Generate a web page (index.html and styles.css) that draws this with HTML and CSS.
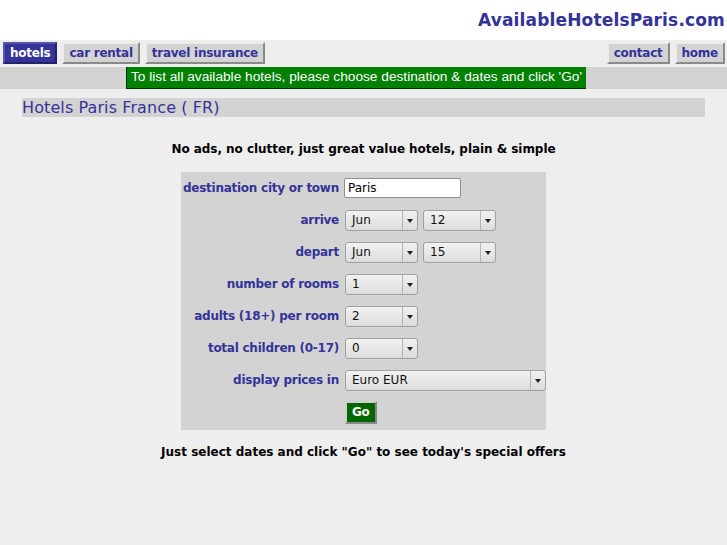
FILE: index.html
```html
<!DOCTYPE html>
<html>
<head>
<meta charset="utf-8">
<title>AvailableHotelsParis.com</title>
<link rel="stylesheet" href="styles.css">
</head>
<body>
<header class="top">
  <div class="brand">AvailableHotelsParis.com</div>
</header>
<nav class="nav">
  <div class="nav-left">
    <a class="tab active" href="#">hotels</a>
    <a class="tab" href="#">car rental</a>
    <a class="tab" href="#">travel insurance</a>
  </div>
  <div class="nav-right">
    <a class="tab" href="#">contact</a>
    <a class="tab" href="#">home</a>
  </div>
</nav>
<div class="band">
  <div class="notice">To list all available hotels, please choose destination &amp; dates and click 'Go'</div>
</div>
<main class="main">
  <h1 class="title">Hotels Paris France ( FR)</h1>
  <p class="tagline">No ads, no clutter, just great value hotels, plain &amp; simple</p>
  <form class="search">
    <div class="row"><span class="label">destination city or town</span><span class="field"><span class="text-input">Paris</span></span></div>
    <div class="row"><span class="label">arrive</span><span class="field"><span class="sel w73"><span class="val">Jun</span><span class="arr"></span></span><span class="sel w73"><span class="val">12</span><span class="arr"></span></span></span></div>
    <div class="row"><span class="label">depart</span><span class="field"><span class="sel w73"><span class="val">Jun</span><span class="arr"></span></span><span class="sel w73"><span class="val">15</span><span class="arr"></span></span></span></div>
    <div class="row"><span class="label">number of rooms</span><span class="field"><span class="sel w73"><span class="val">1</span><span class="arr"></span></span></span></div>
    <div class="row"><span class="label">adults (18+) per room</span><span class="field"><span class="sel w73"><span class="val">2</span><span class="arr"></span></span></span></div>
    <div class="row"><span class="label">total children (0-17)</span><span class="field"><span class="sel w73"><span class="val">0</span><span class="arr"></span></span></span></div>
    <div class="row"><span class="label">display prices in</span><span class="field"><span class="sel w201"><span class="val">Euro EUR</span><span class="arr"></span></span></span></div>
    <div class="row"><span class="label"></span><span class="field"><span class="go">Go</span></span></div>
  </form>
  <p class="tagline bottom">Just select dates and click "Go" to see today's special offers</p>
</main>
</body>
</html>
```
FILE: styles.css
```css
html, body {
  margin: 0;
  padding: 0;
  background: #eeeeee;
  font-family: "DejaVu Sans", sans-serif;
}
.top {
  background: #ffffff;
  height: 40px;
  display: flex;
  justify-content: flex-end;
  align-items: flex-start;
}
.brand {
  font-weight: bold;
  font-size: 17px;
  letter-spacing: 0.17px;
  color: #333399;
  padding: 10px 2px 0 0;
}
.nav {
  display: flex;
  justify-content: space-between;
  padding: 2px 2px 3px 3px;
  height: 22px;
}
.nav-left, .nav-right {
  display: flex;
  gap: 5px;
}
.tab {
  display: block;
  font-weight: bold;
  font-size: 12px;
  letter-spacing: -0.25px;
  color: #333399;
  text-decoration: none;
  background: #d3d3d3;
  border: 2px solid;
  border-color: #ececec #8a8a8a #8a8a8a #ececec;
  padding: 0 5px;
  line-height: 18px;
}
.tab.active {
  background: #333399;
  color: #ffffff;
  border-color: #5555aa #222266 #222266 #5555aa;
}
.band {
  background: #d3d3d3;
  height: 22px;
  display: flex;
  justify-content: center;
}
.notice {
  background: #008000;
  color: #ffffff;
  font-family: "Liberation Sans", Arial, sans-serif;
  font-size: 13.7px;
  line-height: 20px;
  padding: 0 4px;
  border-left: 1px solid #003300;
  border-bottom: 1px solid #003300;
  margin-right: 15px;
}
.main {
  padding: 9px 22px 0 22px;
}
.title {
  margin: 0;
  background: #d3d3d3;
  color: #333399;
  font-weight: normal;
  font-size: 16px;
  letter-spacing: 0.1px;
  line-height: 19px;
  height: 19px;
}
.tagline {
  text-align: center;
  font-weight: bold;
  font-size: 12px;
  letter-spacing: -0.05px;
  color: #000000;
  margin: 24px 0 0 0;
  line-height: 16px;
}
.search {
  width: 365px;
  margin: 15px auto 0;
  background: #d3d3d3;
  padding: 0 0 2px 0;
  display: flex;
  flex-direction: column;
}
.row {
  display: flex;
  align-items: center;
  height: 32px;
}
.label {
  width: 158px;
  text-align: right;
  font-weight: bold;
  font-size: 12px;
  letter-spacing: -0.25px;
  color: #333399;
  padding-right: 6px;
  white-space: nowrap;
}
.field {
  display: flex;
  gap: 5px;
}
.text-input {
  display: block;
  width: 112px;
  height: 18px;
  background: #ffffff;
  border: 1px solid #8f8f8f;
  border-radius: 2px;
  font-size: 12px;
  line-height: 18px;
  padding-left: 3px;
  margin-left: -1px;
}
.sel {
  display: flex;
  height: 19px;
  border: 1px solid #a0a0a0;
  border-radius: 3px;
  background: linear-gradient(#f2f2f2, #dcdcdc);
  font-size: 12px;
  line-height: 19px;
  box-sizing: content-box;
}
.w73 { width: 71px; }
.w201 { width: 199px; }
.val {
  flex: 1;
  padding-left: 6px;
  color: #111111;
}
.arr {
  width: 14px;
  border-left: 1px solid #b4b4b4;
  position: relative;
}
.arr::after {
  content: "";
  position: absolute;
  left: 4px;
  top: 8px;
  border-left: 3px solid transparent;
  border-right: 3px solid transparent;
  border-top: 4px solid #222222;
}
.go {
  display: block;
  background: #006600;
  color: #ffffff;
  font-weight: bold;
  font-size: 12px;
  letter-spacing: -0.25px;
  line-height: 19px;
  padding: 0 5px;
  border: 2px solid;
  border-color: #cfcfcf #888888 #888888 #cfcfcf;
}
.bottom {
  margin-top: 14px;
  letter-spacing: 0;
}
```
